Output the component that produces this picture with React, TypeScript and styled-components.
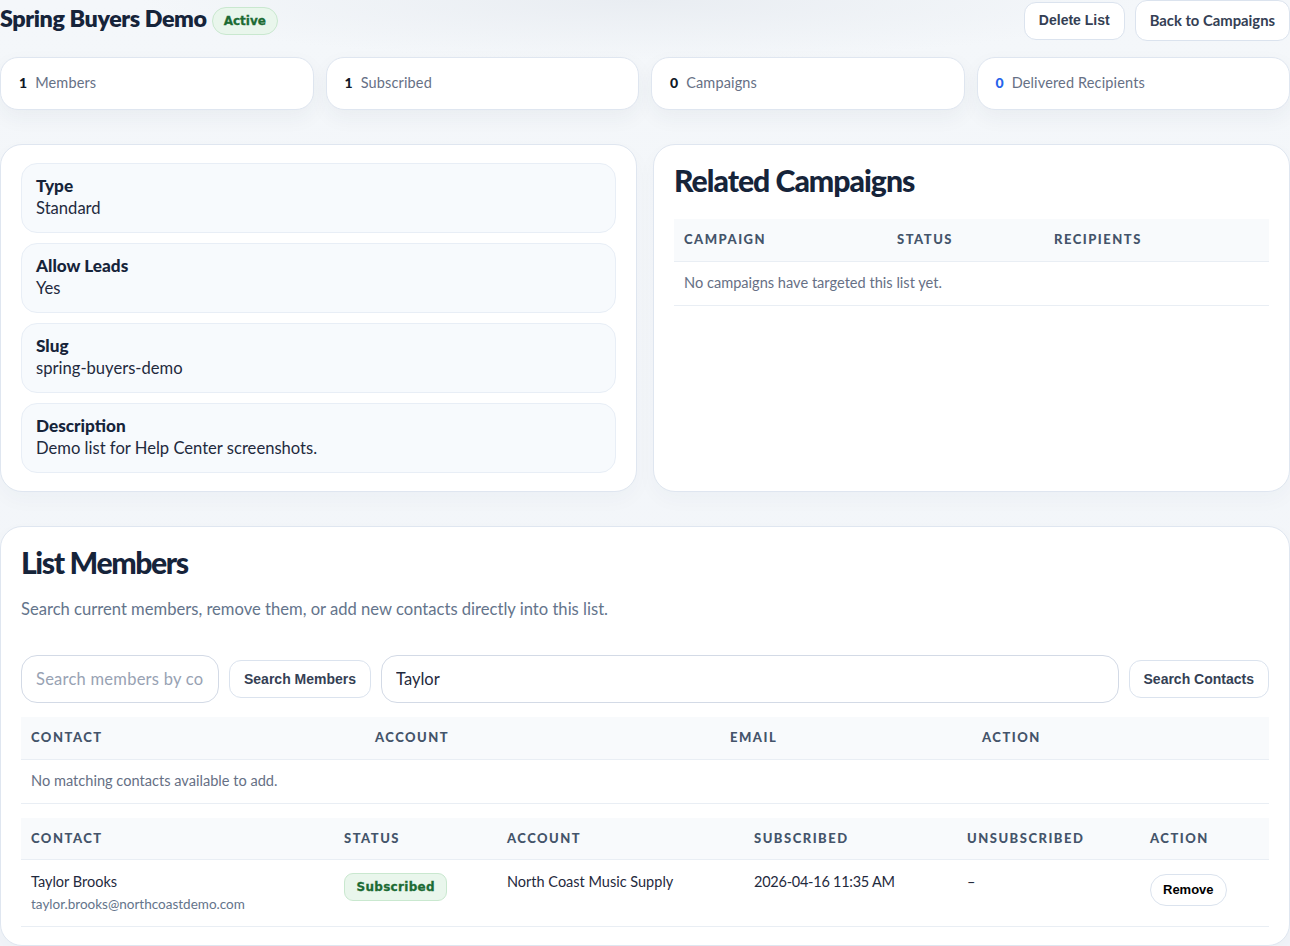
import React from "react";
import styled, { createGlobalStyle } from "styled-components";

const GlobalStyle = createGlobalStyle`
  html, body {
    margin: 0;
    padding: 0;
    height: 946px;
    overflow: hidden;
    background: #f3f6fa;
  }
  * {
    box-sizing: border-box;
  }
  body {
    font-family: Lato, "Noto Sans", sans-serif;
    color: #1f2937;
  }
`;

const Page = styled.div`
  width: 1290px;
  height: 946px;
  overflow: hidden;
  background: radial-gradient(ellipse 500px 60px at 640px 0, #e9edf2 0%, rgba(233, 237, 242, 0) 100%), linear-gradient(180deg, #f4f7fa 0%, #f2f5f9 100%);
`;

const Header = styled.header`
  display: flex;
  justify-content: space-between;
  align-items: center;
  height: 41px;
  margin-bottom: 16px;
`;

const TitleGroup = styled.div`
  display: flex;
  align-items: center;
  gap: 5px;
  margin-top: 1px;
`;

const Title = styled.h1`
  margin: -6px 0 0;
  font-size: 23.3px;
  line-height: 30px;
  font-weight: 800;
  letter-spacing: -0.4px;
  color: #16243a;
`;

const Badge = styled.span<{ $square?: boolean }>`
  display: inline-flex;
  align-items: center;
  justify-content: center;
  height: 28px;
  margin-top: ${(p) => (p.$square ? "1px" : "0")};
  padding: 0 ${(p) => (p.$square ? "11.5px" : "11px")};
  border: 1px solid #c9e8cf;
  border-radius: ${(p) => (p.$square ? "9px" : "14px")};
  background: #e9f6ec;
  color: #1c6b34;
  font-family: "DejaVu Sans", sans-serif;
  font-size: 12px;
  font-weight: 700;
  letter-spacing: ${(p) => (p.$square ? "0.3px" : "0")};
  -webkit-text-stroke: 0.3px #1c6b34;
`;

const HeaderActions = styled.div`
  display: flex;
  align-items: center;
  gap: 10px;
`;

const Button = styled.button<{ $size?: "tall" | "pill" }>`
  height: ${(p) => (p.$size === "tall" ? "41px" : p.$size === "pill" ? "32px" : "38px")};
  padding: 0 ${(p) => (p.$size === "pill" ? "12px" : "14px")} 1px;
  margin-top: ${(p) => (p.$size === "pill" ? "2px" : "0")};
  border: 1px solid #dbe3ee;
  border-radius: ${(p) => (p.$size === "pill" ? "17px" : "12px")};
  background: #fff;
  color: ${(p) => (p.$size === "pill" ? "#000" : "#344054")};
  font-family: "Liberation Sans", Arial, sans-serif;
  font-size: ${(p) => (p.$size === "pill" ? "13px" : "14px")};
  font-weight: 700;
  white-space: nowrap;
`;

const BackLabel = styled.span`
  font-family: Lato, sans-serif;
  font-size: 14.8px;
  font-weight: 700;
`;

const Stats = styled.section`
  display: grid;
  grid-template-columns: repeat(4, 1fr);
  gap: 12px;
  margin-bottom: 34px;
`;

const StatCard = styled.div`
  display: flex;
  align-items: center;
  gap: 8px;
  height: 53px;
  padding: 0 18px 2px;
  border: 1px solid #dfe6f0;
  border-radius: 18px;
  background: #fff;
  box-shadow: 0 8px 20px rgba(30, 50, 80, 0.05);
`;

const StatValue = styled.strong<{ $accent?: boolean }>`
  font-size: 14px;
  font-weight: 900;
  color: ${(p) => (p.$accent ? "#2563eb" : "#111827")};
`;

const StatLabel = styled.span`
  font-size: 14.5px;
  letter-spacing: 0.15px;
  color: #667085;
`;

const Columns = styled.section`
  display: grid;
  grid-template-columns: 637px 637px;
  gap: 16px;
  margin-bottom: 34px;
`;

const Panel = styled.div<{ $tall?: boolean }>`
  height: ${(p) => (p.$tall ? "420px" : "348px")};
  padding: 18px 20px;
  border: 1px solid #dfe6f0;
  border-radius: 22px;
  background: #fff;
  box-shadow: 0 8px 20px rgba(30, 50, 80, 0.03);
`;

const InfoList = styled.div`
  display: flex;
  flex-direction: column;
  gap: 10px;
`;

const InfoCard = styled.div`
  height: 70px;
  padding: 11px 14px;
  border: 1px solid #e8eef6;
  border-radius: 16px;
  background: #f7fafd;
`;

const InfoLabel = styled.div`
  font-size: 17.2px;
  line-height: 22px;
  font-weight: 900;
  color: #16243a;
`;

const InfoValue = styled.div`
  font-size: 16.6px;
  line-height: 22px;
  color: #1f2a3d;
`;

const PanelTitle = styled.h2<{ $compact?: boolean }>`
  margin: -2px 0 ${(p) => (p.$compact ? "16px" : "20px")};
  font-size: 30.2px;
  line-height: 38px;
  font-weight: 900;
  letter-spacing: ${(p) => (p.$compact ? "-1.4px" : "-1px")};
  color: #16243a;
`;

const Intro = styled.p`
  margin: 0 0 34px;
  font-size: 16.6px;
  line-height: 24px;
  color: #64748b;
`;

const SearchRow = styled.div`
  display: flex;
  align-items: center;
  gap: 10px;
  margin-bottom: 14px;
`;

const SearchInput = styled.input<{ $grow?: boolean }>`
  ${(p) => (p.$grow ? "flex: 1;" : "width: 198px;")}
  min-width: 0;
  height: 48px;
  padding: 0 14px;
  border: 1px solid #d3dae6;
  border-radius: 16px;
  background: #fff;
  color: #1f2a3d;
  font-family: Lato, sans-serif;
  font-size: 16.5px;
  outline: none;
  &::placeholder {
    color: #98a2b3;
    letter-spacing: 0.25px;
  }
`;

const Table = styled.table<{ $gap?: boolean }>`
  width: 100%;
  border-collapse: collapse;
  table-layout: fixed;
  margin-bottom: ${(p) => (p.$gap ? "14px" : "0")};
`;

const Th = styled.th<{ $w?: number }>`
  width: ${(p) => (p.$w ? `${p.$w}px` : "auto")};
  height: 42px;
  padding: 0 10px 1px;
  border-bottom: 1px solid #e9eef4;
  background: #f8fafc;
  text-align: left;
  font-size: 13px;
  font-weight: 900;
  letter-spacing: 1.5px;
  text-transform: uppercase;
  color: #44546a;
`;

const Td = styled.td`
  padding: 12px 10px;
  border-bottom: 1px solid #e9eef4;
  vertical-align: top;
  font-size: 14.5px;
  line-height: 19px;
  color: #1f2a3d;
`;

const DateCell = styled(Td)`
  letter-spacing: -0.25px;
`;

const EmptyCell = styled(Td)`
  height: 44px;
  padding: 11px 10px;
  font-size: 14.6px;
  color: #667085;
`;

const ContactEmail = styled.div`
  margin-top: 4px;
  font-size: 13.5px;
  line-height: 19px;
  color: #64748b;
`;

export default function App() {
  return (
    <Page>
      <GlobalStyle />
      <Header>
        <TitleGroup>
          <Title>Spring Buyers Demo</Title>
          <Badge>Active</Badge>
        </TitleGroup>
        <HeaderActions>
          <Button>Delete List</Button>
          <Button $size="tall">
            <BackLabel>Back to Campaigns</BackLabel>
          </Button>
        </HeaderActions>
      </Header>

      <Stats>
        <StatCard>
          <StatValue>1</StatValue>
          <StatLabel>Members</StatLabel>
        </StatCard>
        <StatCard>
          <StatValue>1</StatValue>
          <StatLabel>Subscribed</StatLabel>
        </StatCard>
        <StatCard>
          <StatValue>0</StatValue>
          <StatLabel>Campaigns</StatLabel>
        </StatCard>
        <StatCard>
          <StatValue $accent>0</StatValue>
          <StatLabel>Delivered Recipients</StatLabel>
        </StatCard>
      </Stats>

      <Columns>
        <Panel>
          <InfoList>
            <InfoCard>
              <InfoLabel>Type</InfoLabel>
              <InfoValue>Standard</InfoValue>
            </InfoCard>
            <InfoCard>
              <InfoLabel>Allow Leads</InfoLabel>
              <InfoValue>Yes</InfoValue>
            </InfoCard>
            <InfoCard>
              <InfoLabel>Slug</InfoLabel>
              <InfoValue>spring-buyers-demo</InfoValue>
            </InfoCard>
            <InfoCard>
              <InfoLabel>Description</InfoLabel>
              <InfoValue>Demo list for Help Center screenshots.</InfoValue>
            </InfoCard>
          </InfoList>
        </Panel>
        <Panel>
          <PanelTitle>Related Campaigns</PanelTitle>
          <Table>
            <thead>
              <tr>
                <Th $w={213}>Campaign</Th>
                <Th $w={157}>Status</Th>
                <Th>Recipients</Th>
              </tr>
            </thead>
            <tbody>
              <tr>
                <EmptyCell colSpan={3}>No campaigns have targeted this list yet.</EmptyCell>
              </tr>
            </tbody>
          </Table>
        </Panel>
      </Columns>

      <Panel $tall>
        <PanelTitle $compact>List Members</PanelTitle>
        <Intro>Search current members, remove them, or add new contacts directly into this list.</Intro>
        <SearchRow>
          <SearchInput placeholder="Search members by contact" />
          <Button>Search Members</Button>
          <SearchInput $grow defaultValue="Taylor" />
          <Button>Search Contacts</Button>
        </SearchRow>
        <Table $gap>
          <thead>
            <tr>
              <Th $w={344}>Contact</Th>
              <Th $w={355}>Account</Th>
              <Th $w={252}>Email</Th>
              <Th>Action</Th>
            </tr>
          </thead>
          <tbody>
            <tr>
              <EmptyCell colSpan={4}>No matching contacts available to add.</EmptyCell>
            </tr>
          </tbody>
        </Table>
        <Table>
          <thead>
            <tr>
              <Th $w={313}>Contact</Th>
              <Th $w={163}>Status</Th>
              <Th $w={247}>Account</Th>
              <Th $w={213}>Subscribed</Th>
              <Th $w={183}>Unsubscribed</Th>
              <Th>Action</Th>
            </tr>
          </thead>
          <tbody>
            <tr>
              <Td>
                Taylor Brooks
                <ContactEmail>taylor.brooks@northcoastdemo.com</ContactEmail>
              </Td>
              <Td>
                <Badge $square>Subscribed</Badge>
              </Td>
              <Td>North Coast Music Supply</Td>
              <DateCell>2026-04-16 11:35 AM</DateCell>
              <Td>–</Td>
              <Td>
                <Button $size="pill">Remove</Button>
              </Td>
            </tr>
          </tbody>
        </Table>
      </Panel>
    </Page>
  );
}
